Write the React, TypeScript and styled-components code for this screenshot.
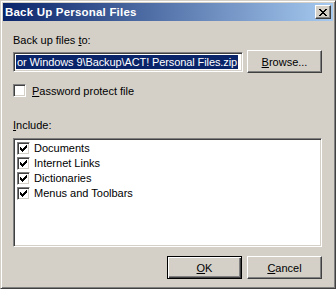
import React from "react";
import styled, { createGlobalStyle } from "styled-components";

const Global = createGlobalStyle`
  html, body { margin: 0; padding: 0; background: #d4d0c8; }
  * { box-sizing: border-box; }
`;

const Window = styled.div`
  width: 336px;
  height: 289px;
  background: #d4d0c8;
  border: 1px solid;
  border-color: #d4d0c8 #404040 #404040 #d4d0c8;
  box-shadow: inset 1px 1px #ffffff, inset -1px -1px #808080;
  padding: 2px;
  display: flex;
  flex-direction: column;
  font-family: "Liberation Sans", Arial, sans-serif;
  font-size: 11px;
  color: #000;
`;

const TitleBar = styled.div`
  height: 18px;
  flex: none;
  display: flex;
  align-items: center;
  justify-content: space-between;
  padding: 0 2px 0 2px;
  background: linear-gradient(to right, #0a246a, #a6caf0);
`;

const TitleText = styled.span`
  color: #fff;
  font-weight: bold;
  font-size: 11.5px;
  line-height: 14px;
  letter-spacing: 0.2px;
`;

const CloseBox = styled.div`
  width: 16px;
  height: 14px;
  background: #d4d0c8;
  border: 1px solid;
  border-color: #ffffff #404040 #404040 #ffffff;
  box-shadow: inset -1px -1px #808080;
  display: flex;
  align-items: center;
  justify-content: center;
`;

const Body = styled.div`
  flex: 1;
  display: flex;
  flex-direction: column;
  padding: 0 8px 0 10px;
`;

const Label = styled.div<{ $top: number }>`
  margin-top: ${(p) => p.$top}px;
  height: 13px;
  line-height: 13px;
  white-space: nowrap;
`;

const Row = styled.div`
  margin-top: 3px;
  display: flex;
  align-items: center;
  gap: 4px;
`;

const Field = styled.div`
  width: 230px;
  height: 20px;
  background: #fff;
  border: 1px solid;
  border-color: #808080 #ffffff #ffffff #808080;
  box-shadow: inset 1px 1px #404040, inset -1px -1px #d4d0c8;
  padding: 2px 0 0 2px;
  overflow: hidden;
  white-space: nowrap;
`;

const Selected = styled.span`
  display: inline-block;
  background: #0a246a;
  color: #fff;
  line-height: 14px;
  height: 14px;
  padding: 0 1px 0 1px;
  letter-spacing: -0.1px;
`;

const Button = styled.div<{ $default?: boolean }>`
  width: 75px;
  height: 23px;
  flex: none;
  display: flex;
  align-items: center;
  justify-content: center;
  background: #d4d0c8;
  border: 1px solid;
  border-color: ${(p) =>
    p.$default ? "#000" : "#ffffff #404040 #404040 #ffffff"};
  box-shadow: ${(p) =>
    p.$default
      ? "inset 1px 1px #ffffff, inset -1px -1px #404040, inset -2px -2px #808080"
      : "inset -1px -1px #808080"};
  white-space: nowrap;
  padding-top: 1px;
`;

const CheckRow = styled.div`
  margin-top: 11px;
  height: 13px;
  display: flex;
  align-items: center;
  gap: 6px;
`;

const Box = styled.div`
  width: 13px;
  height: 13px;
  flex: none;
  background: #fff;
  border: 1px solid;
  border-color: #808080 #ffffff #ffffff #808080;
  box-shadow: inset 1px 1px #404040, inset -1px -1px #d4d0c8;
  display: flex;
  align-items: center;
  justify-content: center;
`;

const ListBox = styled.div`
  margin-top: 6px;
  height: 109px;
  width: 309px;
  background: #fff;
  border: 1px solid;
  border-color: #808080 #ffffff #ffffff #808080;
  box-shadow: inset 1px 1px #404040, inset -1px -1px #d4d0c8;
  padding: 2px 2px 2px 3px;
  display: flex;
  flex-direction: column;
`;

const ListItem = styled.div`
  height: 15px;
  display: flex;
  align-items: center;
  gap: 4px;
  white-space: nowrap;
  line-height: 13px;
`;

const ButtonRow = styled.div`
  margin-top: 9px;
  display: flex;
  justify-content: flex-end;
  gap: 5px;
  width: 309px;
`;

const Check = () => (
  <svg width="7" height="7" viewBox="0 0 7 7" shapeRendering="crispEdges">
    <path
      d="M6 0h1v3h-1zM5 1h1v3h-1zM4 2h1v3h-1zM0 2h1v3h-1zM1 3h1v3h-1zM2 4h1v3h-1zM3 3h1v3h-1z"
      fill="#000"
    />
  </svg>
);

const CloseGlyph = () => (
  <svg width="8" height="7" viewBox="0 0 8 7" shapeRendering="crispEdges">
    <path
      d="M0 0h2v1h-2zM6 0h2v1h-2zM1 1h2v1h-2zM5 1h2v1h-2zM2 2h4v1h-4zM3 3h2v1h-2zM2 4h4v1h-4zM1 5h2v1h-2zM5 5h2v1h-2zM0 6h2v1h-2zM6 6h2v1h-2z"
      fill="#000"
    />
  </svg>
);

const items = ["Documents", "Internet Links", "Dictionaries", "Menus and Toolbars"];

export default function App() {
  return (
    <>
      <Global />
      <Window>
        <TitleBar>
          <TitleText>Back Up Personal Files</TitleText>
          <CloseBox>
            <CloseGlyph />
          </CloseBox>
        </TitleBar>
        <Body>
          <Label $top={13}>
            Back up files <u>t</u>o:
          </Label>
          <Row>
            <Field>
              <Selected>or Windows 9\Backup\ACT! Personal Files.zip</Selected>
            </Field>
            <Button>
              <u>B</u>rowse...
            </Button>
          </Row>
          <CheckRow>
            <Box />
            <span>
              <u>P</u>assword protect file
            </span>
          </CheckRow>
          <Label $top={22}>
            <u>I</u>nclude:
          </Label>
          <ListBox>
            {items.map((t) => (
              <ListItem key={t}>
                <Box>
                  <Check />
                </Box>
                <span>{t}</span>
              </ListItem>
            ))}
          </ListBox>
          <ButtonRow>
            <Button $default>
              <u>O</u>K
            </Button>
            <Button>
              <u>C</u>ancel
            </Button>
          </ButtonRow>
        </Body>
      </Window>
    </>
  );
}
